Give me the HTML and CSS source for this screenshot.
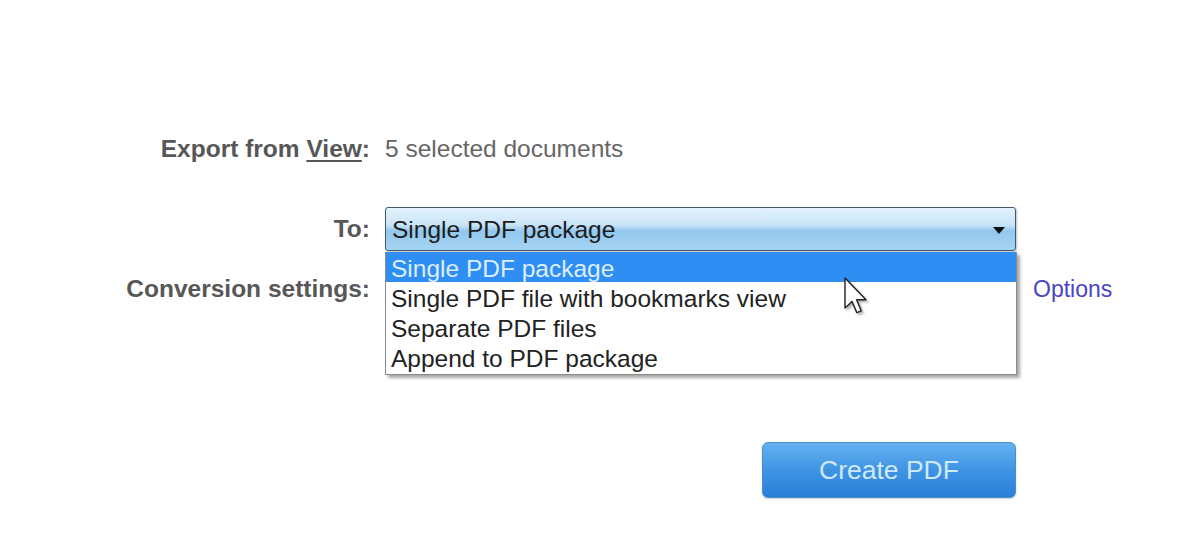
FILE: index.html
```html
<!DOCTYPE html>
<html>
<head>
<meta charset="utf-8">
<link rel="stylesheet" href="styles.css">
</head>
<body>
<div class="page">
  <div class="row row-export">
    <div class="label">Export from <span class="u">View</span>:</div>
    <div class="value text">5 selected documents</div>
  </div>
  <div class="row row-to">
    <div class="label">To:</div>
    <div class="value">
      <div class="select-wrap">
        <div class="select">
          <span>Single PDF package</span>
          <span class="arrow"></span>
        </div>
        <div class="dropdown">
          <div class="opt active">Single PDF package</div>
          <div class="opt">Single PDF file with bookmarks view</div>
          <div class="opt">Separate PDF files</div>
          <div class="opt">Append to PDF package</div>
          <svg class="cursor" width="24" height="38" viewBox="0 0 12 19">
            <path d="M0.5 0.5 L0.5 15.5 L4 12.2 L6.4 17.8 L8.6 16.9 L6.3 11.4 L11 11.4 Z" fill="#fff" stroke="#222" stroke-width="0.7" stroke-linejoin="round"/>
          </svg>
        </div>
      </div>
    </div>
  </div>
  <div class="row row-conv">
    <div class="label">Conversion settings:</div>
    <div class="value conv">
      <div class="placeholder"></div>
      <a class="options">Options</a>
    </div>
  </div>
  <div class="row row-btn">
    <div class="label"></div>
    <div class="value btn-cell">
      <div class="btn">Create PDF</div>
    </div>
  </div>
</div>
</body>
</html>
```
FILE: styles.css
```css
html, body {
  margin: 0;
  padding: 0;
  background: #fff;
}
body {
  width: 1200px;
  height: 533px;
  overflow: hidden;
  font-family: "Liberation Sans", Arial, sans-serif;
}
.page {
  padding-top: 134px;
  display: flex;
  flex-direction: column;
}
.row {
  display: flex;
  align-items: center;
}
.label {
  width: 370px;
  text-align: right;
  font-weight: bold;
  font-size: 24.5px;
  color: #575757;
  flex: none;
}
.u {
  text-decoration: underline;
  text-underline-offset: 3px;
}
.value {
  margin-left: 15px;
  width: 631px;
  flex: none;
}
.text {
  font-size: 24.5px;
  color: #666;
  line-height: 30px;
}
.row-export {
  height: 30px;
}
.row-to {
  margin-top: 43px;
  height: 44px;
  position: relative;
  z-index: 2;
}
.select-wrap {
  position: relative;
}
.select {
  border: 1px solid #3e5872;
  border-radius: 3px;
  background: linear-gradient(#e4f2fc 0%, #c9e4f8 40%, #92c8ee 55%, #a7d4f3 100%);
  display: flex;
  align-items: center;
  justify-content: space-between;
  padding: 2px 10px 0 6px;
  box-sizing: border-box;
  height: 44px;
  font-size: 24.5px;
  color: #1c1c1c;
  box-shadow: 1px 1px 2px rgba(0,0,0,0.25);
}
.arrow {
  width: 0;
  height: 0;
  border-left: 6px solid transparent;
  border-right: 6px solid transparent;
  border-top: 7px solid #111;
}
.dropdown {
  position: absolute;
  left: 0;
  top: 45px;
  width: 630px;
  height: 122px;
  background: #fff;
  border: 1px solid #8a8a8a;
  border-top: none;
  box-shadow: 3px 3px 3px rgba(0,0,0,0.35);
}
.opt {
  height: 30px;
  line-height: 34px;
  font-size: 24.5px;
  padding-left: 5px;
  color: #222;
  overflow: hidden;
}
.opt.active {
  background: #2f8ef4;
  color: #dcefff;
}
.cursor {
  position: absolute;
  left: 458px;
  top: 25px;
  filter: drop-shadow(2px 2px 1px rgba(0,0,0,0.3));
}
.row-conv {
  margin-top: 23px;
  height: 30px;
}
.conv {
  display: flex;
  align-items: center;
  width: auto;
}
.placeholder {
  width: 631px;
  height: 30px;
}
.options {
  margin-left: 17px;
  font-size: 23px;
  color: #4a44c8;
}
.row-btn {
  margin-top: 138px;
}
.btn-cell {
  display: flex;
  justify-content: flex-end;
}
.btn {
  width: 254px;
  height: 56px;
  border-radius: 6px;
  background: linear-gradient(#66b2ef 0%, #3e94e4 50%, #2a7fd8 100%);
  border: 1px solid #4a8ed0;
  box-sizing: border-box;
  display: flex;
  align-items: center;
  justify-content: center;
  font-size: 26.5px;
  color: #cfe8fb;
  box-shadow: 0 1px 2px rgba(0,0,0,0.2);
}
```
